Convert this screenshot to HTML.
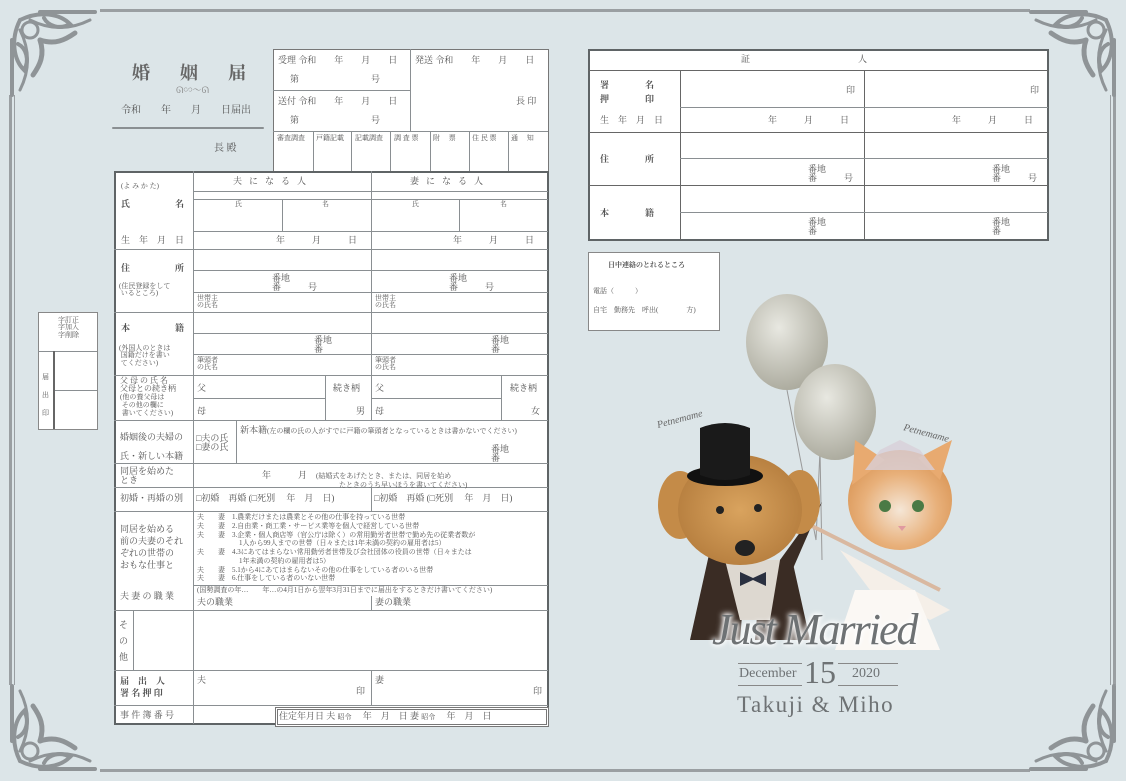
<!DOCTYPE html>
<html><head><meta charset="utf-8"><style>
*{margin:0;padding:0;box-sizing:border-box}
body{width:1126px;height:781px;background:#dce5e8;position:relative;overflow:hidden;font-family:"Liberation Serif","Noto Serif CJK JP","Noto Serif CJK SC",serif;color:#555}
.a{position:absolute}
.h{position:absolute;height:1px;background:#8a8f92}
.v{position:absolute;width:1px;background:#8a8f92}
.box{position:absolute;background:#fff;border:2px solid #5f6466}
.t{position:absolute;font-size:9px;line-height:1.05;white-space:nowrap;color:#555}
.s{font-size:7px}
.b{font-weight:bold}
</style></head><body>

<!-- frame -->
<div class="a" style="left:100px;top:9px;width:930px;height:3px;background:#9a9fa2"></div>
<div class="a" style="left:100px;top:769px;width:930px;height:3px;background:#9a9fa2"></div>
<div class="a" style="left:9px;top:95px;width:3px;height:590px;background:#9a9fa2"></div>
<div class="a" style="left:14px;top:95px;width:1px;height:590px;background:#9a9fa2"></div>
<div class="a" style="left:1113px;top:95px;width:3px;height:590px;background:#9a9fa2"></div>
<div class="a" style="left:1110px;top:95px;width:1px;height:590px;background:#9a9fa2"></div>

<svg class="a" style="left:0;top:0" width="1126" height="781">
<defs><g id="orn" fill="none" stroke="#8f9497" stroke-width="4" stroke-linecap="round">
<path d="M12 95 L12 40 M40 12 L95 12"/>
<path d="M20 20 C40 10 60 14 70 24 C60 30 48 26 44 18"/>
<path d="M20 20 C10 40 14 60 24 70 C30 60 26 48 18 44"/>
<circle cx="30" cy="30" r="8" stroke-width="3"/>
<path d="M30 20 C50 30 70 30 90 20" stroke-width="3"/>
<path d="M20 30 C30 50 30 70 20 90" stroke-width="3"/>
<path d="M40 40 C55 45 65 40 75 33" stroke-width="5"/>
<path d="M40 40 C45 55 40 65 33 75" stroke-width="5"/>
</g></defs>
<use href="#orn"/>
<use href="#orn" transform="translate(1126,0) scale(-1,1)"/>
<use href="#orn" transform="translate(0,781) scale(1,-1)"/>
<use href="#orn" transform="translate(1126,781) scale(-1,-1)"/>
</svg>

<!-- title -->
<div class="t b" style="left:132px;top:64px;font-size:18px;color:#666;letter-spacing:30px">婚姻届</div>
<div class="t" style="left:176px;top:86px;font-size:9px;color:#888">ᘏ∽〜ᘏ</div>
<div class="t" style="left:121px;top:106px;font-size:10px">令和　　年　　月　　日届出</div>
<div class="a" style="left:112px;top:127px;width:152px;height:2px;background:#8a8f92;border-radius:2px"></div>
<div class="t" style="left:214px;top:144px;font-size:10px">長 殿</div>

<!-- top right small box -->
<div class="box" style="left:273px;top:49px;width:276px;height:123px;border-width:1px;border-color:#777"></div>
<div class="v" style="left:410px;top:49px;height:82px"></div>
<div class="h" style="left:273px;top:90px;width:137px"></div>
<div class="h" style="left:273px;top:131px;width:275px"></div>
<div class="v" style="left:313px;top:131px;height:40px"></div>
<div class="v" style="left:351px;top:131px;height:40px"></div>
<div class="v" style="left:390px;top:131px;height:40px"></div>
<div class="v" style="left:430px;top:131px;height:40px"></div>
<div class="v" style="left:469px;top:131px;height:40px"></div>
<div class="v" style="left:508px;top:131px;height:40px"></div>
<div class="t" style="left:278px;top:56px">受理 令和　　年　　月　　日</div>
<div class="t" style="left:290px;top:75px">第　　　　　　　　号</div>
<div class="t" style="left:278px;top:97px">送付 令和　　年　　月　　日</div>
<div class="t" style="left:290px;top:116px">第　　　　　　　　号</div>
<div class="t" style="left:415px;top:56px">発送 令和　　年　　月　　日</div>
<div class="t" style="left:516px;top:97px">長 印</div>
<div class="t s" style="left:277px;top:135px">審査調査</div>
<div class="t s" style="left:316px;top:135px">戸籍記載</div>
<div class="t s" style="left:355px;top:135px">記載調査</div>
<div class="t s" style="left:394px;top:135px">調 査 票</div>
<div class="t s" style="left:433px;top:135px">附　 票</div>
<div class="t s" style="left:472px;top:135px">住 民 票</div>
<div class="t s" style="left:511px;top:135px">通　 知</div>

<!-- main form -->
<div class="box" style="left:114px;top:171px;width:435px;height:554px"></div>
<div class="v" style="left:193px;top:171px;height:553px"></div>
<div class="v" style="left:371px;top:171px;height:249px"></div>
<div class="h" style="left:193px;top:191px;width:355px"></div>
<div class="h" style="left:193px;top:199px;width:355px"></div>
<div class="v" style="left:282px;top:199px;height:32px"></div>
<div class="v" style="left:459px;top:199px;height:32px"></div>
<div class="h" style="left:193px;top:231px;width:355px"></div>
<div class="h" style="left:114px;top:249px;width:434px"></div>
<div class="h" style="left:193px;top:270px;width:355px"></div>
<div class="h" style="left:193px;top:292px;width:355px"></div>
<div class="h" style="left:114px;top:312px;width:434px"></div>
<div class="h" style="left:193px;top:333px;width:355px"></div>
<div class="h" style="left:193px;top:354px;width:355px"></div>
<div class="h" style="left:114px;top:375px;width:434px"></div>
<div class="h" style="left:193px;top:398px;width:132px"></div>
<div class="h" style="left:371px;top:398px;width:130px"></div>
<div class="v" style="left:325px;top:375px;height:45px"></div>
<div class="v" style="left:501px;top:375px;height:45px"></div>
<div class="h" style="left:114px;top:420px;width:434px"></div>
<div class="v" style="left:236px;top:420px;height:43px"></div>
<div class="h" style="left:114px;top:463px;width:434px"></div>
<div class="h" style="left:114px;top:487px;width:434px"></div>
<div class="v" style="left:371px;top:487px;height:24px"></div>
<div class="h" style="left:114px;top:511px;width:434px"></div>
<div class="h" style="left:193px;top:585px;width:355px"></div>
<div class="v" style="left:371px;top:596px;height:14px"></div>
<div class="h" style="left:114px;top:610px;width:434px"></div>
<div class="v" style="left:133px;top:610px;height:60px"></div>
<div class="h" style="left:114px;top:670px;width:434px"></div>
<div class="v" style="left:371px;top:670px;height:35px"></div>
<div class="h" style="left:114px;top:705px;width:434px"></div>

<div class="t s" style="left:121px;top:183px">(よ み か た)</div>
<div class="t b" style="left:121px;top:200px">氏　　　　　名</div>
<div class="t" style="left:121px;top:236px">生　年　月　日</div>
<div class="t" style="left:233px;top:177px;letter-spacing:7px">夫になる人</div>
<div class="t" style="left:410px;top:177px;letter-spacing:7px">妻になる人</div>
<div class="t s" style="left:235px;top:201px">氏</div><div class="t s" style="left:322px;top:201px">名</div>
<div class="t s" style="left:412px;top:201px">氏</div><div class="t s" style="left:500px;top:201px">名</div>
<div class="t" style="left:276px;top:236px">年　　　月　　　日</div>
<div class="t" style="left:453px;top:236px">年　　　月　　　日</div>
<div class="t b" style="left:121px;top:264px">住　　　　　所</div>
<div class="t s" style="left:119px;top:283px">(住民登録をして<br>&nbsp;いるところ)</div>
<div class="t" style="left:272px;top:274px">番地<br>番　　　号</div>
<div class="t" style="left:449px;top:274px">番地<br>番　　　号</div>
<div class="t s" style="left:197px;top:295px">世帯主<br>の氏名</div>
<div class="t s" style="left:375px;top:295px">世帯主<br>の氏名</div>
<div class="t b" style="left:121px;top:324px">本　　　　　籍</div>
<div class="t s" style="left:119px;top:345px">(外国人のときは<br>&nbsp;国籍だけを書い<br>&nbsp;てください)</div>
<div class="t" style="left:314px;top:336px">番地<br>番</div>
<div class="t" style="left:491px;top:336px">番地<br>番</div>
<div class="t s" style="left:197px;top:357px">筆頭者<br>の氏名</div>
<div class="t s" style="left:375px;top:357px">筆頭者<br>の氏名</div>
<div class="t" style="left:120px;top:377px;font-size:8px;line-height:1">父 母 の 氏 名<br>父母との続き柄<br><span class="s">(他の養父母は<br>&nbsp;その他の欄に<br>&nbsp;書いてください)</span></div>
<div class="t" style="left:197px;top:384px">父</div><div class="t" style="left:197px;top:407px">母</div>
<div class="t" style="left:333px;top:384px">続き柄</div><div class="t" style="left:356px;top:407px">男</div>
<div class="t" style="left:375px;top:384px">父</div><div class="t" style="left:375px;top:407px">母</div>
<div class="t" style="left:510px;top:384px">続き柄</div><div class="t" style="left:531px;top:407px">女</div>
<div class="t" style="left:120px;top:433px">婚姻後の夫婦の<br><br>氏・新しい本籍</div>
<div class="t" style="left:196px;top:434px">□夫の氏<br>□妻の氏</div>
<div class="t" style="left:240px;top:426px">新本籍<span class="s">(左の欄の氏の人がすでに戸籍の筆頭者となっているときは書かないでください)</span></div>
<div class="t" style="left:491px;top:445px">番地<br>番</div>
<div class="t" style="left:120px;top:467px">同居を始めた<br>とき</div>
<div class="t" style="left:262px;top:471px">年　　　月　<span class="s">(結婚式をあげたとき、または、同居を始め<br>　　　　　　　　　　　たときのうち早いほうを書いてください)</span></div>
<div class="t" style="left:120px;top:494px">初婚・再婚の別</div>
<div class="t" style="left:196px;top:494px">□初婚　再婚 (□死別　 年　月　日)</div>
<div class="t" style="left:374px;top:494px">□初婚　再婚 (□死別　 年　月　日)</div>
<div class="t" style="left:120px;top:523px;line-height:1.35">同居を始める<br>前の夫妻のそれ<br>ぞれの世帯の<br>おもな仕事と</div>
<div class="t" style="left:120px;top:592px">夫 妻 の 職 業</div>
<div class="t s" style="left:197px;top:513px;line-height:1.25">
夫　　妻　1.農業だけまたは農業とその他の仕事を持っている世帯<br>
夫　　妻　2.自由業・商工業・サービス業等を個人で経営している世帯<br>
夫　　妻　3.企業・個人商店等（官公庁は除く）の常用勤労者世帯で勤め先の従業者数が<br>
　　　　　　1人から99人までの世帯（日々または1年未満の契約の雇用者は5）<br>
夫　　妻　4.3にあてはまらない常用勤労者世帯及び会社団体の役員の世帯（日々または<br>
　　　　　　1年未満の契約の雇用者は5）<br>
夫　　妻　5.1から4にあてはまらないその他の仕事をしている者のいる世帯<br>
夫　　妻　6.仕事をしている者のいない世帯</div>
<div class="t s" style="left:197px;top:587px">(国勢調査の年…　　年…の4月1日から翌年3月31日までに届出をするときだけ書いてください)</div>
<div class="t" style="left:197px;top:598px">夫の職業</div>
<div class="t" style="left:375px;top:598px">妻の職業</div>
<div class="t" style="left:119px;top:617px;line-height:1.8">そ<br>の<br>他</div>
<div class="t b" style="left:120px;top:676px;line-height:1.3">届　出　人<br>署 名 押 印</div>
<div class="t" style="left:197px;top:676px">夫</div><div class="t" style="left:356px;top:687px">印</div>
<div class="t" style="left:375px;top:676px">妻</div><div class="t" style="left:533px;top:687px">印</div>
<div class="t" style="left:120px;top:711px">事 件 簿 番 号</div>
<div class="a" style="left:275px;top:707px;width:274px;height:20px;border:3px double #777;background:#fff"></div>
<div class="t" style="left:279px;top:712px">住定年月日 夫 <span class="s">昭令</span>　 年　月　日 妻 <span class="s">昭令</span>　 年　月　日</div>

<!-- correction box -->
<div class="box" style="left:38px;top:312px;width:60px;height:118px;border-width:1px;border-color:#888"></div>
<div class="h" style="left:38px;top:351px;width:59px"></div>
<div class="a" style="left:53px;top:351px;width:2px;height:78px;background:#666"></div>
<div class="h" style="left:55px;top:390px;width:42px"></div>
<div class="t s" style="left:58px;top:317px">字訂正<br>字加入<br>字削除</div>
<div class="t s" style="left:42px;top:368px;line-height:2.6">届<br>出<br>印</div>

<!-- witness table -->
<div class="box" style="left:588px;top:49px;width:461px;height:192px"></div>
<div class="h" style="left:588px;top:70px;width:460px;background:#666"></div>
<div class="v" style="left:680px;top:70px;height:170px;background:#666"></div>
<div class="v" style="left:864px;top:70px;height:170px;background:#666"></div>
<div class="h" style="left:680px;top:107px;width:368px"></div>
<div class="h" style="left:588px;top:132px;width:460px;background:#666"></div>
<div class="h" style="left:680px;top:158px;width:368px"></div>
<div class="h" style="left:588px;top:185px;width:460px;background:#666"></div>
<div class="h" style="left:680px;top:212px;width:368px"></div>
<div class="t" style="left:741px;top:55px">証　　　　　　　　　　　　人</div>
<div class="t b" style="left:600px;top:79px;line-height:1.5">署　　　　名<br>押　　　　印</div>
<div class="t" style="left:600px;top:116px">生　年　月　日</div>
<div class="t b" style="left:600px;top:155px">住　　　　所</div>
<div class="t b" style="left:600px;top:209px">本　　　　籍</div>
<div class="t" style="left:846px;top:86px">印</div><div class="t" style="left:1030px;top:86px">印</div>
<div class="t" style="left:768px;top:116px">年　　　月　　　日</div>
<div class="t" style="left:952px;top:116px">年　　　月　　　日</div>
<div class="t" style="left:808px;top:165px">番地<br>番　　　号</div>
<div class="t" style="left:992px;top:165px">番地<br>番　　　号</div>
<div class="t" style="left:808px;top:218px">番地<br>番</div>
<div class="t" style="left:992px;top:218px">番地<br>番</div>

<!-- contact -->
<div class="box" style="left:588px;top:252px;width:132px;height:79px;border-width:1px;border-color:#888"></div>
<div class="t s b" style="left:608px;top:262px">日中連絡のとれるところ</div>
<div class="t s" style="left:593px;top:288px">電話（　　　）</div>
<div class="t s" style="left:593px;top:307px">自宅　勤務先　呼出(　　　　方)</div>

<!-- illustration -->
<svg class="a" style="left:640px;top:290px" width="340" height="440">
<defs>
<radialGradient id="bl" cx="0.4" cy="0.35" r="0.7"><stop offset="0" stop-color="#e8e8e1"/><stop offset="1" stop-color="#a9a89b"/></radialGradient>
<radialGradient id="dog" cx="0.5" cy="0.5" r="0.6"><stop offset="0" stop-color="#d9a35e"/><stop offset="1" stop-color="#b27a3b"/></radialGradient>
<radialGradient id="cat" cx="0.5" cy="0.6" r="0.6"><stop offset="0" stop-color="#f5e6d6"/><stop offset="0.6" stop-color="#e8b07a"/><stop offset="1" stop-color="#d99555"/></radialGradient>
</defs>
<path d="M147 100 L176 250 L180 160 L182 270" stroke="#999" fill="none"/>
<ellipse cx="147" cy="52" rx="41" ry="48" fill="url(#bl)"/>
<ellipse cx="195" cy="122" rx="41" ry="48" fill="url(#bl)"/>
<!-- bride -->
<path d="M200 260 L310 320 L290 330 L230 300 Z" fill="#f5efe8"/>
<path d="M230 300 L215 300 L195 360 L300 360 L275 300 Z" fill="#fbf8f4"/>
<path d="M170 235 L300 300" stroke="#d9b8a0" stroke-width="4"/>
<ellipse cx="260" cy="210" rx="52" ry="50" fill="url(#cat)"/>
<path d="M212 195 L215 150 L245 170 Z M300 190 L312 150 L278 168 Z" fill="#e8aa70"/>
<path d="M225 180 L240 160 L260 150 L280 160 L295 180 Z" fill="#d8d0d8" opacity="0.8"/>
<circle cx="245" cy="216" r="6" fill="#4a7a45"/><circle cx="278" cy="216" r="6" fill="#4a7a45"/>
<path d="M258 236 L266 236 L262 241Z" fill="#e09aa0"/>
<!-- groom -->
<path d="M70 260 L50 350 L100 350 L105 290 Z M150 260 L170 350 L115 350 L120 290 Z" fill="#3a2c24"/>
<path d="M182 212 L140 270 L148 290 Z" fill="#3a2c24"/>
<path d="M85 270 L140 270 L130 330 L100 330 Z" fill="#ddd8d0"/>
<path d="M100 282 L113 288 L126 282 L126 296 L113 290 L100 296Z" fill="#2a3040"/>
<ellipse cx="40" cy="215" rx="22" ry="34" fill="#c48b48"/><ellipse cx="160" cy="212" rx="20" ry="32" fill="#c48b48"/>
<ellipse cx="100" cy="220" rx="62" ry="55" fill="url(#dog)"/>
<circle cx="80" cy="220" r="4" fill="#222"/><circle cx="118" cy="218" r="4" fill="#222"/>
<ellipse cx="105" cy="258" rx="10" ry="8" fill="#222"/>
<ellipse cx="85" cy="186" rx="38" ry="10" fill="#111"/>
<path d="M60 185 L60 138 Q85 128 110 138 L110 185 Q85 195 60 185Z" fill="#1a1a1a"/>
<text x="18" y="138" font-family="Liberation Serif" font-style="italic" font-size="10" fill="#666" transform="rotate(-15 18 138)">Petnemame</text>
<text x="263" y="140" font-family="Liberation Serif" font-style="italic" font-size="10" fill="#666" transform="rotate(15 263 140)">Petnemame</text>
</svg>
<div class="a" style="left:712px;top:604px;font-family:'Liberation Serif',serif;font-style:italic;font-size:44px;color:#6e7274;letter-spacing:-2px;text-shadow:0 0 4px #fff,0 0 6px #fff,0 0 8px #fff">Just Married</div>
<div class="a" style="left:738px;top:663px;width:64px;height:1px;background:#888"></div>
<div class="a" style="left:738px;top:685px;width:64px;height:1px;background:#888"></div>
<div class="a" style="left:838px;top:663px;width:60px;height:1px;background:#888"></div>
<div class="a" style="left:838px;top:685px;width:60px;height:1px;background:#888"></div>
<div class="a" style="left:739px;top:666px;font-family:'Liberation Serif',serif;font-size:14px;color:#6e7274">December</div>
<div class="a" style="left:804px;top:654px;font-family:'Liberation Serif',serif;font-size:32px;color:#6e7274">15</div>
<div class="a" style="left:852px;top:666px;font-family:'Liberation Serif',serif;font-size:14px;color:#6e7274">2020</div>
<div class="a" style="left:737px;top:692px;font-family:'Liberation Serif',serif;font-size:23px;color:#6e7274;letter-spacing:1.5px">Takuji &amp; Miho</div>
</body></html>
